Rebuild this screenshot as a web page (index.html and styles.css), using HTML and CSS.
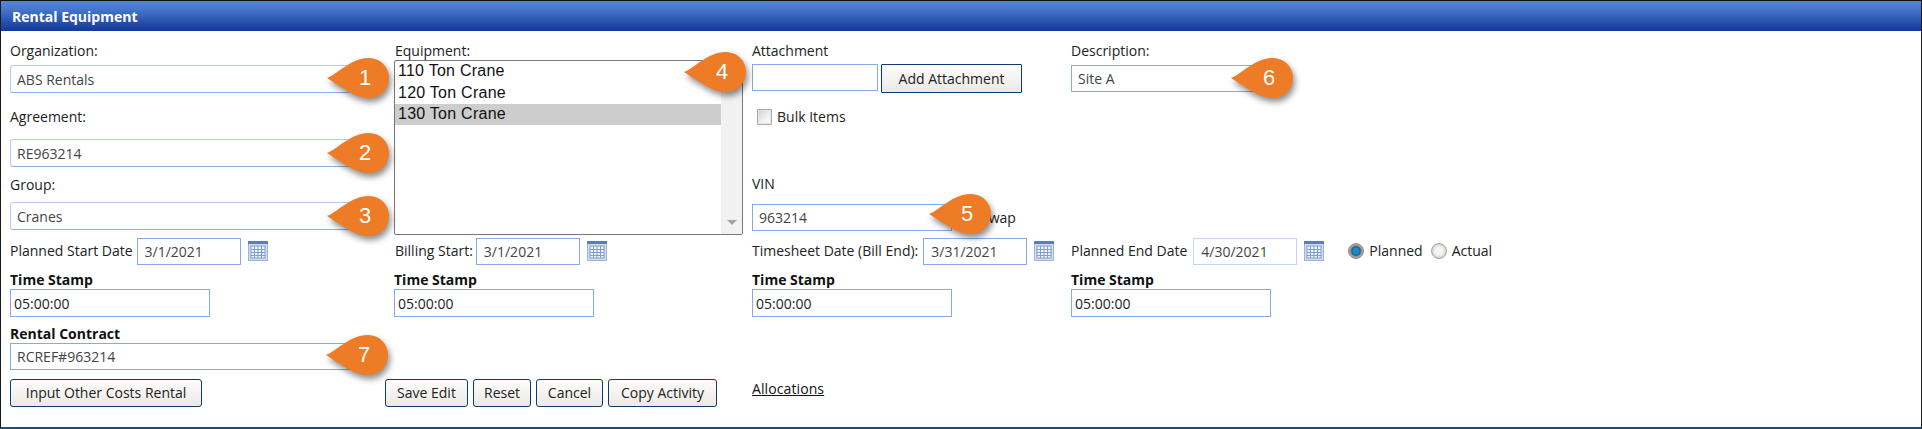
FILE: index.html
```html
<!DOCTYPE html>
<html lang="en">
<head>
<meta charset="utf-8">
<title>Rental Equipment</title>
<link rel="stylesheet" href="styles.css">
</head>
<body>
<svg class="defs" width="0" height="0" aria-hidden="true">
  <defs>
    <symbol id="cal" viewBox="0 0 20 20">
      <rect x="0.5" y="0.5" width="19" height="19" fill="#cfdcf3" stroke="#9db4dc"/>
      <rect x="0" y="0" width="20" height="3" fill="#5c7db5"/>
      <rect x="3" y="5" width="14" height="12" fill="#f2f6fd" stroke="#7f9cd4"/>
      <path d="M6.5 5v12M10 5v12M13.5 5v12M3 8.500h14M3 11.500h14M3 14.500h14" stroke="#7f9cd4" stroke-width="1" fill="none"/>
    </symbol>
    <symbol id="drop" viewBox="0 0 64 40">
      <path d="M0 20C10 17 23 0 42 0A20 20 0 1 1 42 40C30 40 22 34 0 20Z" fill="#ee7b25"/>
    </symbol>
  </defs>
</svg>
<main class="panel">
  <h1 class="title">Rental Equipment</h1>
  <form class="form">
    <section class="col col-a">
      <label class="lbl">Organization:</label>
      <input class="field soft wide mt5" value="ABS Rentals">
      <label class="lbl mt15">Agreement:</label>
      <input class="field soft wide mt13" value="RE963214">
      <label class="lbl mt9">Group:</label>
      <input class="field soft wide mt8" value="Cranes">
    </section>
    <section class="col col-b">
      <label class="lbl">Equipment:</label>
      <div class="list">
        <div class="opts">
          <div class="opt">110 Ton Crane</div>
          <div class="opt">120 Ton Crane</div>
          <div class="opt sel">130 Ton Crane</div>
        </div>
        <div class="sbar"><span class="arrow"></span></div>
      </div>
    </section>
    <section class="col col-c">
      <label class="lbl">Attachment</label>
      <div class="attach">
        <input class="field attach-in">
        <button type="button" class="btn btn-add">Add Attachment</button>
      </div>
      <div class="bulk"><span class="check"></span><span class="txt">Bulk Items</span></div>
      <label class="lbl vin">VIN</label>
      <div class="vinrow">
        <input class="field vin-in" value="963214">
        <span class="txt swap">Swap</span>
      </div>
    </section>
    <section class="col col-d">
      <label class="lbl">Description:</label>
      <input class="field desc mt5" value="Site A">
    </section>

    <div class="date">
      <span class="txt">Planned Start Date</span>
      <input class="field date-in" value="3/1/2021">
      <svg class="cal"><use href="#cal"/></svg>
    </div>
    <div class="date">
      <span class="txt">Billing Start:</span>
      <input class="field date-in tight" value="3/1/2021">
      <svg class="cal"><use href="#cal"/></svg>
    </div>
    <div class="date">
      <span class="txt">Timesheet Date (Bill End):</span>
      <input class="field date-in loose" value="3/31/2021">
      <svg class="cal"><use href="#cal"/></svg>
    </div>
    <div class="date">
      <span class="txt">Planned End Date</span>
      <input class="field date-in pale loose2" value="4/30/2021">
      <svg class="cal"><use href="#cal"/></svg>
      <span class="radio on"></span><span class="txt">Planned</span>
      <span class="radio"></span><span class="txt">Actual</span>
    </div>

    <div class="stamp"><strong class="bold">Time Stamp</strong><input class="field time" value="05:00:00"></div>
    <div class="stamp shift"><strong class="bold">Time Stamp</strong><input class="field time" value="05:00:00"></div>
    <div class="stamp"><strong class="bold">Time Stamp</strong><input class="field time" value="05:00:00"></div>
    <div class="stamp"><strong class="bold">Time Stamp</strong><input class="field time" value="05:00:00"></div>

    <div class="contract">
      <strong class="bold">Rental Contract</strong>
      <input class="field wide" value="RCREF#963214">
    </div>

    <div class="acts"><button type="button" class="btn other">Input Other Costs Rental</button></div>
    <div class="acts group">
      <button type="button" class="btn save">Save Edit</button>
      <button type="button" class="btn reset">Reset</button>
      <button type="button" class="btn cancel">Cancel</button>
      <button type="button" class="btn copy">Copy Activity</button>
    </div>
    <div class="acts"><a class="link" href="#">Allocations</a></div>
  </form>

  <div class="pin p1"><svg class="drop"><use href="#drop"/></svg><span class="num">1</span></div>
  <div class="pin p2"><svg class="drop"><use href="#drop"/></svg><span class="num">2</span></div>
  <div class="pin p3"><svg class="drop"><use href="#drop"/></svg><span class="num">3</span></div>
  <div class="pin p4"><svg class="drop"><use href="#drop"/></svg><span class="num">4</span></div>
  <div class="pin p5"><svg class="drop"><use href="#drop"/></svg><span class="num">5</span></div>
  <div class="pin p6"><svg class="drop"><use href="#drop"/></svg><span class="num">6</span></div>
  <div class="pin p7"><svg class="drop"><use href="#drop"/></svg><span class="num">7</span></div>
</main>
</body>
</html>
```
FILE: styles.css
```css
html, body { margin: 0; padding: 0; background: #fff; }
body { font-family: "Open Sans", "Noto Sans", sans-serif; font-size: 14px; color: #222; overflow: hidden; }
.defs { position: absolute; }
.panel { position: relative; box-sizing: border-box; width: 1922px; height: 429px; border-left: 1px solid #1a1a1a; border-right: 1px solid #1a1a1a; border-bottom: 2px solid #1d4a8a; }
.title { margin: 0; box-sizing: border-box; height: 31px; padding-left: 11px; border-top: 1px solid #111; background: linear-gradient(#5485d8, #4a78cc 25%, #123c9e 95%); color: #fff; font-size: 14px; font-weight: 700; line-height: 32px; }
.form { display: grid; grid-template-columns: 385px 357px 319px 1fr; padding-left: 9px; }
.col { display: flex; flex-direction: column; align-items: flex-start; padding-top: 11px; height: 194px; }
.lbl, .txt, .link { font-size: 14px; line-height: 18px; white-space: nowrap; }
.link { letter-spacing: .1px; }
.mt5 { margin-top: 5px; }
.mt8 { margin-top: 8px; }
.mt9 { margin-top: 9px; }
.mt13 { margin-top: 13px; }
.mt15 { margin-top: 15px; }
.field { box-sizing: border-box; display: block; height: 27px; padding: 0 6px; border: 1px solid #85aae8; border-radius: 0; background: #fff; color: #444; font-family: inherit; font-size: 14px; outline: none; }
.soft { height: 28px; border: 1px solid #b4cdf0; border-bottom-color: #8fb0e0; border-radius: 3px; }
.wide { width: 340px; }
.list { display: flex; box-sizing: border-box; width: 349px; height: 175px; margin-left: -1px; border: 1px solid #777; border-radius: 2px; overflow: hidden; }
.opts { flex: 1; }
.opt { height: 21px; padding-left: 3px; color: #111; font-family: "Liberation Sans", sans-serif; font-size: 16px; letter-spacing: .25px; line-height: 21px; }
.opt:first-child { line-height: 19px; }
.opt:nth-child(2) { height: 22px; }
.sel { background: #cdcdcd; line-height: 19px; }
.sbar { display: flex; justify-content: center; align-items: flex-end; width: 21px; background: #f1f1f1; }
.arrow { width: 0; height: 0; margin-bottom: 9px; border-left: 5px solid transparent; border-right: 5px solid transparent; border-top: 5px solid #a3a3a3; }
.attach { display: flex; align-items: flex-start; gap: 3px; margin-top: 4px; }
.attach-in { width: 126px; }
.btn { box-sizing: border-box; height: 28px; padding: 0; border: 1px solid #0d3c6e; border-radius: 3px; background: linear-gradient(#fdfdfd, #ece9e4); color: #222; font-family: inherit; font-size: 14px; line-height: 24px; white-space: nowrap; }
.btn-add { width: 141px; height: 29px; border-radius: 1px; }
.bulk { display: flex; align-items: center; height: 18px; margin-top: 15px; margin-left: 5px; }
.check { box-sizing: border-box; width: 15px; height: 16px; margin-right: 5px; border: 1px solid #aaa; border-radius: 1px; background: linear-gradient(135deg, #d0d0d0, #f7f7f7 70%); box-shadow: inset 0 0 0 1px #e4e4e4; }
.vin { margin-top: 49px; }
.vinrow { display: flex; align-items: center; margin-top: 11px; }
.vin-in { width: 200px; }
.swap { margin-left: 29px; }
.desc { width: 184px; }
.date { display: flex; align-items: flex-start; margin-top: 2px; height: 27px; }
.date .txt { line-height: 26px; }
.date-in { width: 104px; margin-left: 4px; padding-left: 7px; font-size: 14px; }
.tight { margin-left: 3px; }
.loose { margin-left: 5px; }
.loose2 { margin-left: 6px; }
.pale { border-color: #c2d6f4; }
.cal { width: 20px; height: 20px; margin: 3px 0 0 7px; }
.radio { box-sizing: border-box; width: 16px; height: 16px; margin: 5px 5px 0 8px; border: 1px solid #a5a5a5; border-radius: 50%; background: radial-gradient(#f4f4f4 40%, #bdbdbd 90%); }
.on { margin-left: 24px; border-color: #8e8e8e; background: radial-gradient(#1a8ac4 30%, #235a80 42%, #9a9a9a 58%, #c4c4c4 90%); }
.stamp { display: flex; flex-direction: column; align-items: flex-start; margin-top: 5px; }
.shift { margin-left: -1px; }
.bold { font-size: 14px; font-weight: 700; line-height: 19px; color: #111; }
.time { width: 200px; height: 28px; padding-left: 3px; font-size: 14px; color: #222; }
.contract { grid-column: 1 / -1; display: flex; flex-direction: column; align-items: flex-start; margin-top: 7px; }
.contract .field { height: 27px; }
.acts { margin-top: 9px; height: 28px; }
.group { display: flex; gap: 5px; margin-left: -10px; }
.other { width: 192px; }
.save { width: 83px; }
.reset { width: 58px; }
.cancel { width: 67px; }
.copy { width: 109px; }
.link { color: #111; text-decoration: underline; line-height: 20px; }
.pin { position: absolute; left: var(--x); top: var(--y); width: 64px; height: 40px; }
.drop { display: block; width: 64px; height: 40px; overflow: visible; filter: drop-shadow(2px 4px 3px rgba(0,0,0,.45)); }
.num { position: absolute; left: 18px; top: 0; width: 40px; color: #fff; font-family: "Liberation Sans", sans-serif; font-size: 22px; line-height: 40px; text-align: center; }
.p1 { --x: 326px; --y: 58px; }
.p2 { --x: 326px; --y: 133px; }
.p3 { --x: 326px; --y: 196px; }
.p4 { --x: 683px; --y: 52px; }
.p5 { --x: 928px; --y: 194px; }
.p6 { --x: 1230px; --y: 58px; }
.p7 { --x: 325px; --y: 335px; }
```
